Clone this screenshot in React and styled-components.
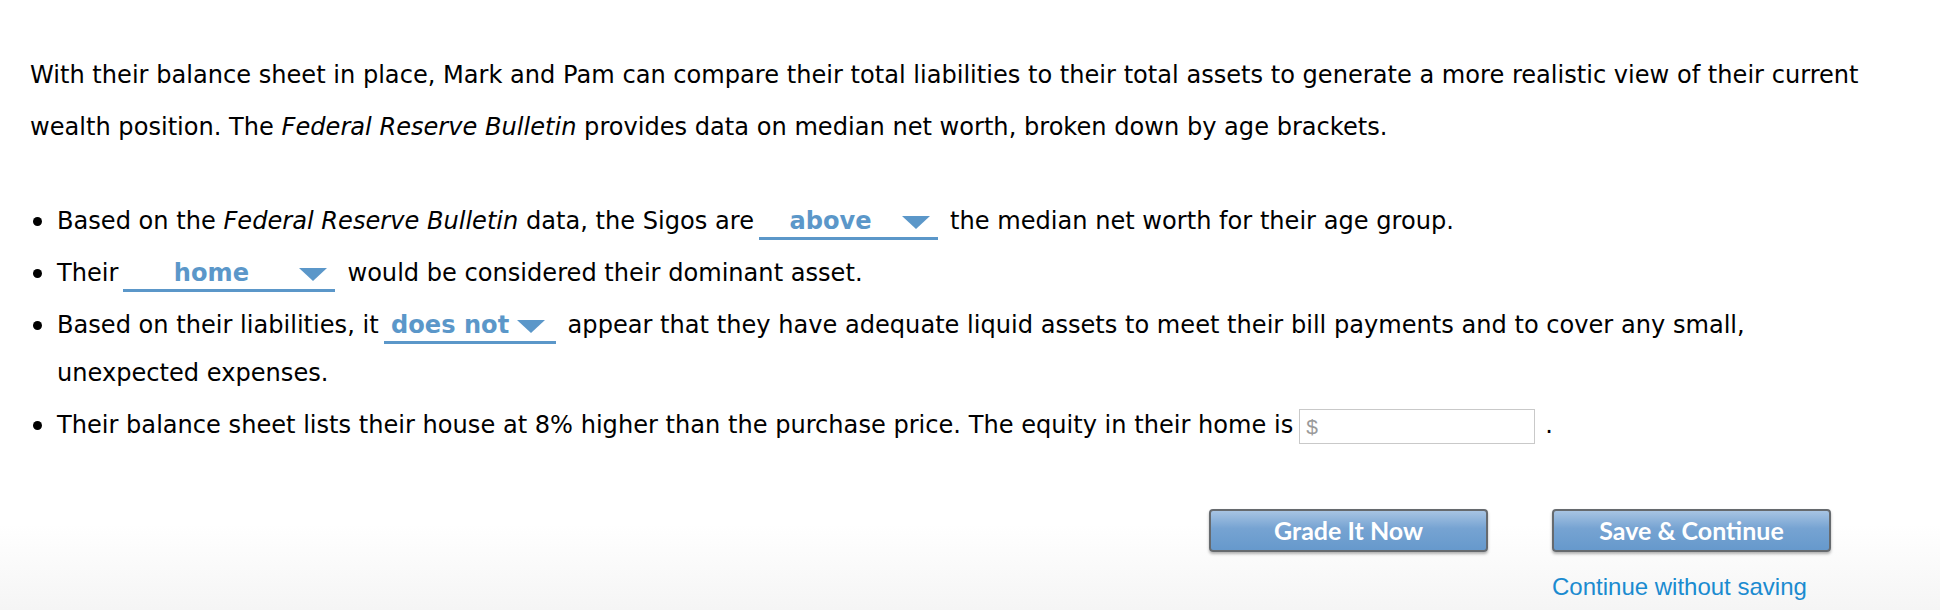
import React from "react";
import styled, { createGlobalStyle } from "styled-components";

const GlobalStyle = createGlobalStyle`
  html, body {
    margin: 0;
    padding: 0;
    background: #ffffff;
  }
  body {
    font-family: "DejaVu Sans", Verdana, sans-serif;
    color: #000;
  }
`;

const Page = styled.div`
  box-sizing: border-box;
  width: 1940px;
  min-height: 610px;
  padding: 49px 56px 0 30px;
  background: linear-gradient(to bottom, #ffffff 86%, #f5f5f5 100%);
`;

const Intro = styled.p`
  margin: 0;
  font-size: 24.1px;
  line-height: 52px;
`;

const List = styled.ul`
  list-style: none;
  margin: 44px 0 0;
  padding: 0 0 0 27px;
  font-size: 24.1px;
  line-height: 48px;
`;

const Item = styled.li`
  margin-bottom: 4px;

  &::before {
    content: "";
    display: inline-block;
    width: 9px;
    height: 9px;
    border-radius: 50%;
    background: #000;
    margin-left: -24px;
    margin-right: 15px;
    vertical-align: 3px;
  }
`;

const Select = styled.span`
  display: inline-flex;
  align-items: baseline;
  box-sizing: border-box;
  width: ${(p) => p.$width}px;
  margin: 0 12px 0 ${(p) => p.$gap || 5}px;
  line-height: 30px;
  padding-bottom: 1px;
  border-bottom: 3px solid #5b97c9;
  color: #5b97c9;
  font-weight: bold;
  vertical-align: baseline;
`;

const SelectLabel = styled.span`
  flex: 1;
  text-align: center;
`;

const Caret = styled.svg`
  width: 28px;
  height: 13px;
  margin-right: ${(p) => p.$right || 8}px;
  flex-shrink: 0;
`;

const Dropdown = ({ value, width, right, gap }) => (
  <Select $width={width} $gap={gap}>
    <SelectLabel>{value}</SelectLabel>
    <Caret $right={right} viewBox="0 0 28 13">
      <polygon points="0,0 28,0 14,13" fill="#5b97c9" />
    </Caret>
  </Select>
);

const MoneyBox = styled.span`
  display: inline-block;
  box-sizing: border-box;
  width: 236px;
  height: 35px;
  margin: 0 10px 0 6px;
  padding: 0 6px;
  border: 1px solid #c9c9c9;
  color: #9a9a9a;
  font-family: "Liberation Sans", Arial, sans-serif;
  font-size: 21px;
  line-height: 33px;
  vertical-align: middle;
`;

const Actions = styled.div`
  display: flex;
  justify-content: flex-end;
  align-items: flex-start;
  gap: 64px;
  margin-top: 60px;
  padding-right: 53px;
`;

const Column = styled.div`
  display: flex;
  flex-direction: column;
  align-items: flex-start;
`;

const Button = styled.button`
  box-sizing: border-box;
  width: 279px;
  height: 43px;
  border: 2px solid #666a6e;
  border-radius: 4px;
  background: linear-gradient(to bottom, #a7c4e3 0%, #76a3d2 45%, #6699cc 100%);
  box-shadow: 0 2px 3px rgba(0, 0, 0, 0.3);
  color: #ffffff;
  font-family: Lato, "Open Sans", sans-serif;
  font-weight: bold;
  font-size: 25px;
  line-height: 39px;
  padding: 0;
  cursor: pointer;
`;

const TextLink = styled.a`
  margin-top: 21px;
  color: #1b8bd0;
  font-family: "Liberation Sans", Arial, sans-serif;
  font-size: 24px;
  line-height: 28px;
  text-decoration: none;
`;

export default function App() {
  return (
    <>
      <GlobalStyle />
      <Page>
        <Intro>
          With their balance sheet in place, Mark and Pam can compare their total
          liabilities to their total assets to generate a more realistic view of
          their current wealth position. The <i>Federal Reserve Bulletin</i>{" "}
          provides data on median net worth, broken down by age brackets.
        </Intro>
        <List>
          <Item>
            Based on the <i>Federal Reserve Bulletin</i> data, the Sigos are
            <Dropdown value="above" width={179} />
            the median net worth for their age group.
          </Item>
          <Item>
            Their
            <Dropdown value="home" width={212} />
            would be considered their dominant asset.
          </Item>
          <Item>
            Based on their liabilities, it
            <Dropdown value="does not" width={172} right={11} />
            appear that they have adequate liquid assets to meet their bill
            payments and to cover any small, unexpected expenses.
          </Item>
          <Item>
            Their balance sheet lists their house at 8% higher than the purchase
            price. The equity in their home is<MoneyBox>$</MoneyBox>.
          </Item>
        </List>
        <Actions>
          <Column>
            <Button>Grade It Now</Button>
          </Column>
          <Column>
            <Button>Save &amp; Continue</Button>
            <TextLink href="#">Continue without saving</TextLink>
          </Column>
        </Actions>
      </Page>
    </>
  );
}
